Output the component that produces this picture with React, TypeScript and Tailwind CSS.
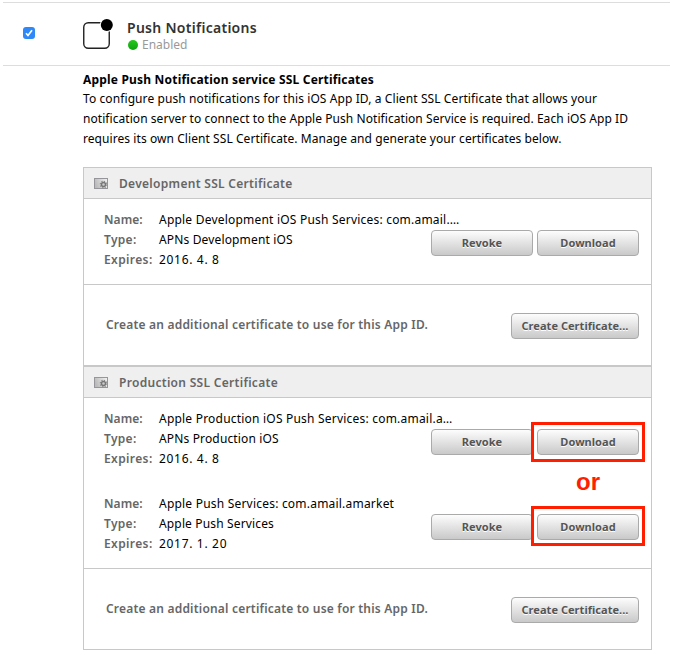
import { ReactNode } from 'react';

interface Certificate {
  name: string;
  type: string;
  expires: string;
}

const development: Certificate = {
  name: 'Apple Development iOS Push Services: com.amail.…',
  type: 'APNs Development iOS',
  expires: '2016. 4. 8',
};

const production: Certificate[] = [
  { name: 'Apple Production iOS Push Services: com.amail.a…', type: 'APNs Production iOS', expires: '2016. 4. 8' },
  { name: 'Apple Push Services: com.amail.amarket', type: 'Apple Push Services', expires: '2017. 1. 20' },
];

function Button({ children, className }: { children: ReactNode; className: string }) {
  return (
    <button className={`flex h-[26px] shrink-0 items-center justify-center whitespace-nowrap rounded-[4px] border border-[#aaa] bg-linear-to-b from-[#fdfdfd] to-[#c9c9c9] text-[11px] leading-6 font-bold tracking-[0.04px] text-[#555] [text-shadow:0_1px_0_#fff] ${className}`}>
      {children}
    </button>
  );
}

function CertificateIcon() {
  return (
    <svg width="14" height="11" viewBox="0 0 14 11" className="shrink-0">
      <defs>
        <linearGradient id="cert" x1="0" y1="0.3" x2="1" y2="0">
          <stop offset="0" stopColor="#bbb" />
          <stop offset="1" stopColor="#f4f4f4" />
        </linearGradient>
      </defs>
      <rect x="0.5" y="0.5" width="13" height="10" fill="url(#cert)" stroke="#96969a" />
      <circle cx="9.5" cy="6.5" r="3.2" fill="none" stroke="#888" strokeWidth="1.2" strokeDasharray="1.2 1.313" />
      <circle cx="9.5" cy="6.5" r="2" fill="#ccc" stroke="#777" strokeWidth="1.4" />
    </svg>
  );
}

function CertificateRow({ cert, mark }: { cert: Certificate; mark?: string }) {
  return (
    <div className="flex">
      <dl className="grid w-[327px] shrink-0 grid-cols-[55px_auto] text-[12px] leading-5 tracking-[0.15px]">
        <dt className="font-semibold tracking-[0.05px] text-[#666]">Name:</dt>
        <dd className="whitespace-nowrap tracking-[0.21px]">{cert.name}</dd>
        <dt className="font-semibold tracking-[0.3px] text-[#666]">Type:</dt>
        <dd>{cert.type}</dd>
        <dt className="font-semibold tracking-[0.38px] text-[#666]">Expires:</dt>
        <dd className="tracking-[0.68px]">{cert.expires}</dd>
      </dl>
      <div className="relative mt-5 flex h-[26px] gap-1">
        <Button className="w-[102px]">Revoke</Button>
        <Button className="w-[102px]">Download</Button>
        {mark && <div className={`absolute -right-1.5 h-10 w-[114px] border-3 border-[#ff1e00] ${mark}`} />}
      </div>
    </div>
  );
}

function CertificateSection({ title, children }: { title: string; children: ReactNode }) {
  return (
    <section className="border border-[#c8c8c8]">
      <h3 className="flex h-[31px] items-center gap-[11px] border-b border-[#c8c8c8] bg-[#efefef] pl-2.5 text-[12px] font-semibold tracking-[0.3px] text-[#666]">
        <CertificateIcon />
        <span className="pt-0.5">{title}</span>
      </h3>
      <div className="pl-5 pr-3 pt-[11px]">{children}</div>
      <div className="flex h-[81px] items-center justify-between border-t border-[#c8c8c8] pl-[22px] pr-3 text-[12px] font-semibold tracking-[0.2px] text-[#666]">
        Create an additional certificate to use for this App ID.
        <Button className="mt-0.5 w-32">Create Certificate...</Button>
      </div>
    </section>
  );
}

export default function App() {
  return (
    <div className="h-[661px] w-[687px] overflow-hidden bg-white pl-[3px] pt-0.5 text-black [font-family:'Noto_Sans','Open_Sans',sans-serif]">
      <header className="flex h-16 w-[667px] border-y border-[#ddd]">
        <div className="mt-6 ml-5 size-3 rounded-[3px] bg-[#2f88f8]">
          <svg width="12" height="12" viewBox="0 0 12 12" fill="none" stroke="#fff" strokeWidth="1.7">
            <path d="M3 6.2 5 8.5 9 3.2" />
          </svg>
        </div>
        <svg width="32" height="32" viewBox="0 0 32 32" className="mt-4 ml-12">
          <rect x="0.75" y="3.75" width="25.5" height="25.5" rx="4.5" fill="#fff" stroke="#222" strokeWidth="1.4" />
          <circle cx="23.8" cy="6" r="7" fill="#fff" />
          <circle cx="23.8" cy="6" r="6" fill="#000" />
        </svg>
        <div className="mt-[15px] ml-3">
          <h1 className="text-[14px] leading-5 font-semibold tracking-[0.28px] text-[#333]">Push Notifications</h1>
          <p className="ml-px flex items-center gap-1 text-[12px] leading-[14px] text-[#999]">
            <span className="size-2.5 rounded-full bg-linear-to-b from-[#25c81c] to-[#0da212]" />
            Enabled
          </p>
        </div>
      </header>
      <main className="ml-20 w-[569px]">
        <h2 className="mt-1 text-[12px] leading-[19px] font-bold tracking-[0.19px]">Apple Push Notification service SSL Certificates</h2>
        <p className="whitespace-nowrap text-[12px] leading-5">
          <span className="tracking-[0.095px]">To configure push notifications for this iOS App ID, a Client SSL Certificate that allows your</span>
          <br />
          <span className="tracking-[0.057px]">notification server to connect to the Apple Push Notification Service is required. Each iOS App ID</span>
          <br />
          <span className="tracking-[0.07px]">requires its own Client SSL Certificate. Manage and generate your certificates below.</span>
        </p>
        <div className="mt-[18px]">
          <CertificateSection title="Development SSL Certificate">
            <div className="h-[74px]">
              <CertificateRow cert={development} />
            </div>
          </CertificateSection>
          <CertificateSection title="Production SSL Certificate">
            <div className="relative flex h-[159px] flex-col gap-[25px]">
              <CertificateRow cert={production[0]} mark="-top-[7px]" />
              <CertificateRow cert={production[1]} mark="-top-2" />
              <span className="absolute right-[39px] top-[59px] text-[24px] leading-7 font-bold text-[#ff1e00] [font-family:'Liberation_Sans',Arial,sans-serif]">or</span>
            </div>
          </CertificateSection>
        </div>
      </main>
    </div>
  );
}
